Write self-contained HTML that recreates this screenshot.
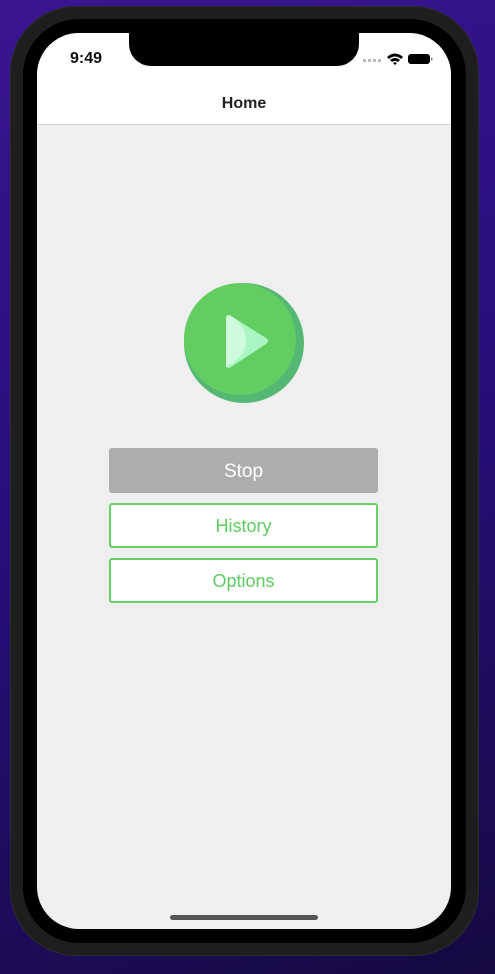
<!DOCTYPE html>
<html><head><style>
*{margin:0;padding:0;box-sizing:border-box}
body{width:495px;height:974px;overflow:hidden;background:linear-gradient(160deg,#3a1590 0%,#2a0f80 40%,#1d0c5a 80%,#150a40 100%);font-family:"Liberation Sans",sans-serif;position:relative}
.bezel{position:absolute;left:10px;top:6px;width:469px;height:950px;border-radius:66px;background:#1e1e1e;border:1px solid #2c2c2c}
.black{position:absolute;left:23px;top:19px;width:443px;height:924px;border-radius:56px;background:#000}
.screen{position:absolute;left:37px;top:33px;width:414px;height:896px;border-radius:42px;background:#efefef;overflow:hidden}
.nav{position:absolute;left:0;top:0;width:414px;height:92px;background:#fff;border-bottom:1px solid #cfcfcf}
.notch{position:absolute;left:92px;top:0;width:230px;height:33px;background:#000;border-radius:0 0 22px 22px}
.time{position:absolute;left:33px;top:17px;font-size:16px;font-weight:bold;color:#111}
.title{position:absolute;left:0;width:414px;top:62px;text-align:center;font-size:16px;font-weight:bold;color:#222}
.btn{position:absolute;left:72px;width:269px;height:45px;border-radius:3px;text-align:center;line-height:47px;font-size:18px}
.stop{top:415px;background:#adadad;color:#fff;font-size:19px}
.ol{border:2px solid #66d166;background:#fff;color:#5fcc5f;line-height:43px}
.home{position:absolute;left:133px;top:882px;width:148px;height:5px;border-radius:3px;background:#555}
</style></head><body>
<div class="bezel"></div>
<div class="black"></div>
<div class="screen">
 <div class="nav">
  <div class="time">9:49</div>
  <div class="title">Home</div>
  <svg style="position:absolute;left:326px;top:19px" width="70" height="14" viewBox="0 0 70 14">
   <g fill="#bbb"><rect x="0" y="7" width="3" height="3"/><rect x="5" y="7" width="3" height="3"/><rect x="10" y="7" width="3" height="3"/><rect x="15" y="7" width="3" height="3"/></g>
   <path d="M24 5 Q32 -2 40 5 L38 7 Q32 2 26 7Z M27 8 Q32 4 37 8 L35 10 Q32 7.5 29 10Z M30 11 L32 13 L34 11 Q32 9.5 30 11Z" fill="#000"/>
   <rect x="45" y="2" width="22" height="10" rx="3" fill="#000"/><rect x="68" y="5.5" width="1.5" height="3" fill="#888"/>
  </svg>
 </div>
 <div class="notch"></div>
 <svg style="position:absolute;left:147px;top:250px" width="120" height="120" viewBox="0 0 120 120">
  <circle cx="60" cy="60" r="60" fill="#54b874"/>
  <circle cx="56" cy="56" r="56" fill="#64cd62"/>
  <path d="M42 36 Q42 30 47 33 L82 55 Q86 58 82 61 L47 84 Q42 87 42 81Z" fill="#aaf6c2"/>
  <path d="M42 36 Q42 30 47 33 L53 37 Q62 47 62 58 Q62 70 50 79 L42 84Z" fill="#cdfbdb"/>
 </svg>
 <div class="btn stop">Stop</div>
 <div class="btn ol" style="top:470px">History</div>
 <div class="btn ol" style="top:525px">Options</div>
 <div class="home"></div>
</div>
</body></html>
